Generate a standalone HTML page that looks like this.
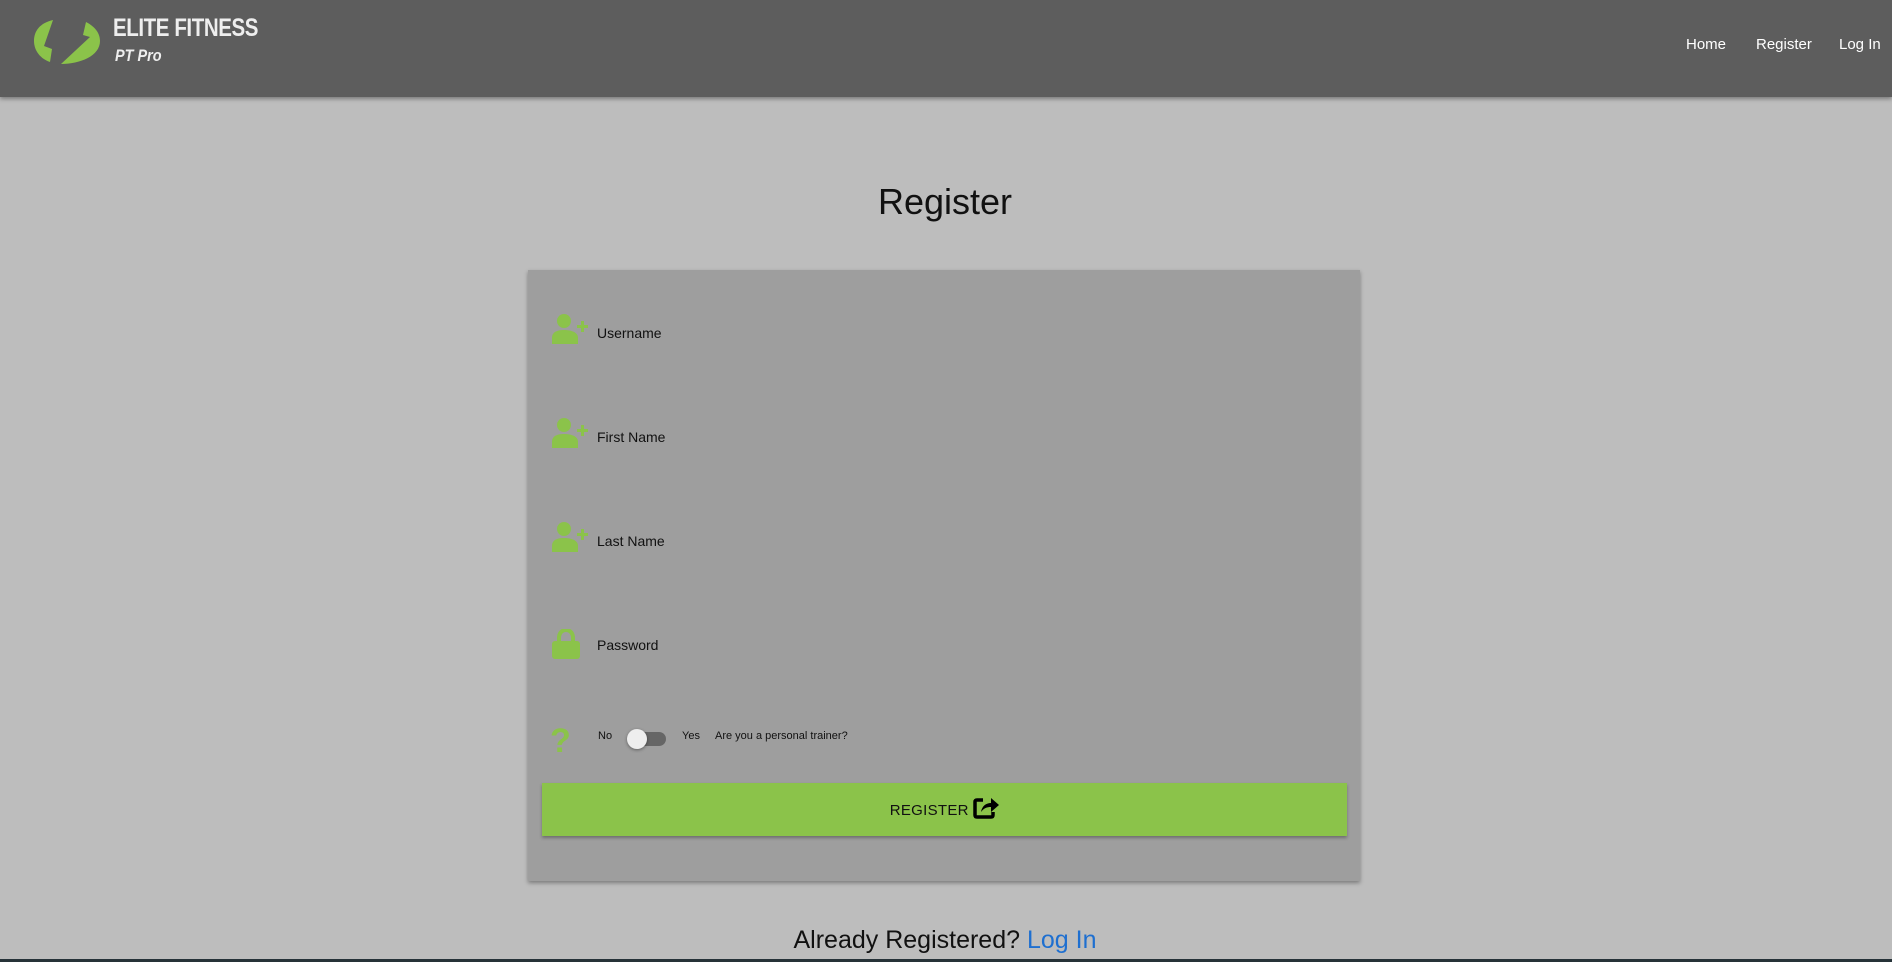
<!DOCTYPE html>
<html><head><meta charset="utf-8"><style>
*{margin:0;padding:0;box-sizing:border-box}
body{width:1892px;height:962px;background:#bdbdbd;font-family:"Liberation Sans",sans-serif;position:relative;overflow:hidden;color:#111}
.hdr{position:absolute;left:0;top:0;width:1892px;height:97px;background:#5d5d5d;box-shadow:0 2px 4px rgba(0,0,0,.35)}
.brand{position:absolute;left:113px;top:14px;color:#eee;font-weight:bold;font-size:25px;letter-spacing:-0.5px;transform:scaleX(.82);transform-origin:left}
.sub{position:absolute;left:115px;top:46px;color:#eee;font-weight:bold;font-style:italic;font-size:17px;transform:scaleX(.85);transform-origin:left}
.nav{position:absolute;top:36px;color:#fff;font-size:15px}
h1{position:absolute;top:181px;left:0;width:1890px;text-align:center;font-weight:normal;font-size:36px}
.card{position:absolute;left:528px;top:270px;width:832px;height:611px;background:#9e9e9e;box-shadow:0 2px 4px rgba(0,0,0,.35)}
.lbl{position:absolute;left:69px;font-size:14px;top:0}
.ic{position:absolute;left:24px}
.btn{position:absolute;left:14px;top:513px;width:805px;height:53px;background:#8bc34a;box-shadow:0 2px 3px rgba(0,0,0,.3);text-align:center;font-size:15px;line-height:55px;letter-spacing:.3px}
.small{position:absolute;font-size:11px;top:460px}
.foot{position:absolute;top:926px;left:0;width:1890px;text-align:center;font-size:25px}
</style></head><body>
<div class="hdr">
<svg style="position:absolute;left:34px;top:19px" width="67" height="46" viewBox="0 0 67 46"><path d="M19 1 C6 4 0 12 0 22 C0 32 7 40 16 43 L18 30 L10 27 Z" fill="#8bc34a"/><path d="M27 45 C46 45 66 37 66 22 C66 12 58 6 52 3 L49 16 L56 18 Z" fill="#8bc34a"/></svg>
<div class="brand">ELITE FITNESS</div>
<div class="sub">PT Pro</div>
<div class="nav" style="left:1686px">Home</div>
<div class="nav" style="left:1756px">Register</div>
<div class="nav" style="left:1839px">Log In</div>
</div>
<h1>Register</h1>
<div class="card">
<svg class="ic" style="top:44px" width="38" height="30" viewBox="0 0 38 30"><circle cx="12" cy="7" r="7" fill="#8bc34a"/><path d="M0 30 V24 C0 18 5 16 12 16 C19 16 26 18 26 24 V30Z" fill="#8bc34a"/><path d="M29 7 H32 V11 H36 V14 H32 V18 H29 V14 H25 V11 H29Z" fill="#8bc34a"/></svg>
<div class="lbl" style="top:55px">Username</div>
<svg class="ic" style="top:148px" width="38" height="30" viewBox="0 0 38 30"><circle cx="12" cy="7" r="7" fill="#8bc34a"/><path d="M0 30 V24 C0 18 5 16 12 16 C19 16 26 18 26 24 V30Z" fill="#8bc34a"/><path d="M29 7 H32 V11 H36 V14 H32 V18 H29 V14 H25 V11 H29Z" fill="#8bc34a"/></svg>
<div class="lbl" style="top:159px">First Name</div>
<svg class="ic" style="top:252px" width="38" height="30" viewBox="0 0 38 30"><circle cx="12" cy="7" r="7" fill="#8bc34a"/><path d="M0 30 V24 C0 18 5 16 12 16 C19 16 26 18 26 24 V30Z" fill="#8bc34a"/><path d="M29 7 H32 V11 H36 V14 H32 V18 H29 V14 H25 V11 H29Z" fill="#8bc34a"/></svg>
<div class="lbl" style="top:263px">Last Name</div>
<svg class="ic" style="top:359px" width="28" height="30" viewBox="0 0 28 30"><path d="M7 13 V9 C7 4 10 1 14 1 C18 1 21 4 21 9 V13" stroke="#8bc34a" stroke-width="4" fill="none"/><rect x="0" y="12" width="28" height="18" rx="3" fill="#8bc34a"/></svg>
<div class="lbl" style="top:367px">Password</div>
<div style="position:absolute;left:22px;top:452px;color:#8bc34a;font-size:34px;font-weight:bold">?</div>
<div class="small" style="left:70px">No</div>
<div style="position:absolute;left:102px;top:462px;width:36px;height:14px;border-radius:7px;background:#666"></div>
<div style="position:absolute;left:99px;top:459px;width:20px;height:20px;border-radius:50%;background:#eee;box-shadow:0 1px 3px rgba(0,0,0,.4)"></div>
<div class="small" style="left:154px">Yes</div>
<div class="small" style="left:187px">Are you a personal trainer?</div>
<div class="btn">REGISTER <svg style="vertical-align:-4px" width="26" height="24" viewBox="0 0 26 24"><path d="M10 5 H4 C2.5 5 2 5.5 2 7 V20 C2 21.5 2.5 22 4 22 H18 C19.5 22 20 21.5 20 20 V17" stroke="#000" stroke-width="3.5" fill="none"/><path d="M8 17 C9 11 13 8 18 8 V3 L26 10 L18 17 V12 C14 12 11 13 8 17Z" fill="#000"/></svg></div>
</div>
<div class="foot">Already Registered? <span style="color:#1e6fd0">Log In</span></div>
<div style="position:absolute;left:0;top:959px;width:1892px;height:3px;background:#263238"></div>
</body></html>
